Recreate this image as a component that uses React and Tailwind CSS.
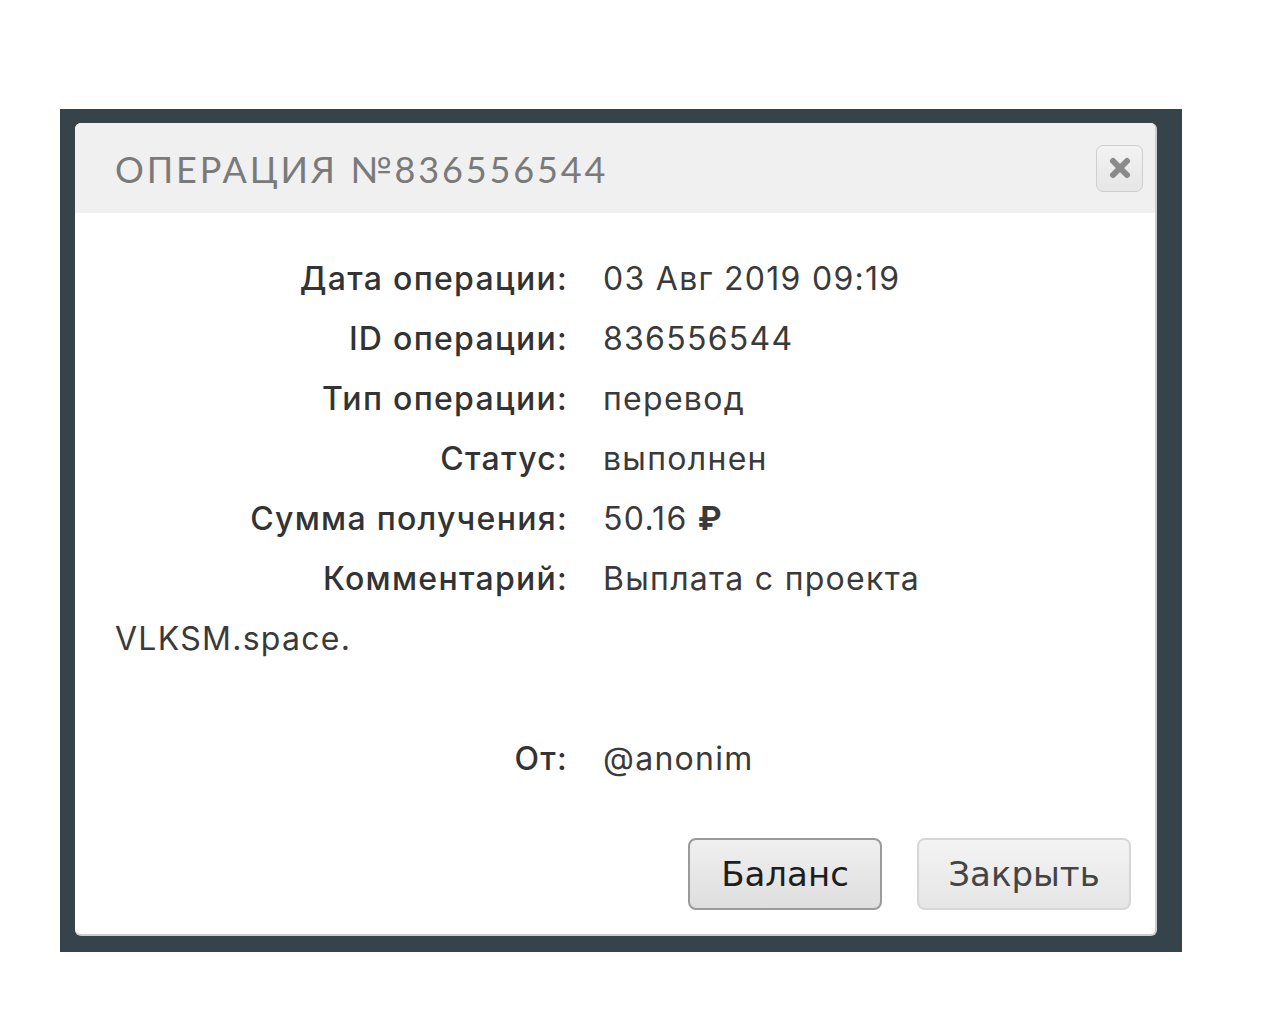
import React from "react";

const rows = [
  ["Дата операции:", "03 Авг 2019 09:19"],
  ["ID операции:", "836556544"],
  ["Тип операции:", "перевод"],
  ["Статус:", "выполнен"],
  ["Сумма получения:", "50.16 ₽"],
];

function Label({ children }) {
  return (
    <span className="inline-block w-[453px] text-right font-medium text-[#333]">{children}</span>
  );
}

export default function App() {
  return (
    <div className="w-[1280px] h-[1024px] bg-white relative">
      <div className="pt-[109px] pl-[60px]">
        <div className="w-[1122px] h-[843px] bg-[#37434b] pt-[14px] pl-[15px]">
          <div className="w-[1082px] h-[813px] bg-white rounded-[6px] border-r-2 border-b-2 border-[#c9cdd0] overflow-hidden flex flex-col">
            <div className="h-[90px] bg-[#f0f0f0] flex items-center justify-between pl-[40px] pr-[12px]">
              <div
                className="text-[36px] text-[#7a7a7a] tracking-[0.08em] leading-none pt-[2px]"
                style={{ fontFamily: "Lato, 'Noto Sans', sans-serif" }}
              >
                ОПЕРАЦИЯ №836556544
              </div>
              <button className="w-[47px] h-[47px] rounded-[7px] border border-[#cfcfcf] bg-gradient-to-b from-[#f3f3f3] via-[#ececec] to-[#e6e6e6] flex items-center justify-center">
                <svg width="24" height="24" viewBox="0 0 24 24">
                  <path d="M5 5 L19 19 M19 5 L5 19" stroke="#8a8a8a" strokeWidth="6" strokeLinecap="round" />
                </svg>
              </button>
            </div>
            <div
              className="pl-[40px] pr-[40px] pt-[36px] text-[32px] tracking-[0.04em] leading-[60px] text-[#3a3a3a]"
              style={{ fontFamily: "Inter, 'Noto Sans', sans-serif" }}
            >
              {rows.map(([l, v]) => (
                <div key={l} className="whitespace-nowrap">
                  <Label>{l}</Label>
                  <span className="ml-[35px]">
                    {v.endsWith("₽") ? (
                      <>
                        {v.slice(0, -1)}
                        <span className="font-bold">₽</span>
                      </>
                    ) : (
                      v
                    )}
                  </span>
                </div>
              ))}
              <div className="whitespace-nowrap">
                <Label>Комментарий:</Label>
                <span className="ml-[35px]">Выплата с проекта</span>
              </div>
              <div>VLKSM.space.</div>
              <div className="h-[60px]"></div>
              <div className="whitespace-nowrap">
                <Label>От:</Label>
                <span className="ml-[35px]">@anonim</span>
              </div>
            </div>
            <div className="flex justify-end gap-[35px] pr-[24px] mt-[49px]">
              <button
                className="w-[194px] h-[72px] rounded-[8px] border-2 border-[#9a9a9a] bg-gradient-to-b from-[#f0f0f0] to-[#dedede] text-[34px] text-[#1e1e1e]"
                style={{ fontFamily: "'DejaVu Sans', sans-serif" }}
              >
                Баланс
              </button>
              <button
                className="w-[214px] h-[72px] rounded-[8px] border-2 border-[#d6d6d6] bg-gradient-to-b from-[#f3f3f3] to-[#e6e6e6] text-[34px] text-[#444]"
                style={{ fontFamily: "'DejaVu Sans', sans-serif" }}
              >
                Закрыть
              </button>
            </div>
          </div>
        </div>
      </div>
    </div>
  );
}
